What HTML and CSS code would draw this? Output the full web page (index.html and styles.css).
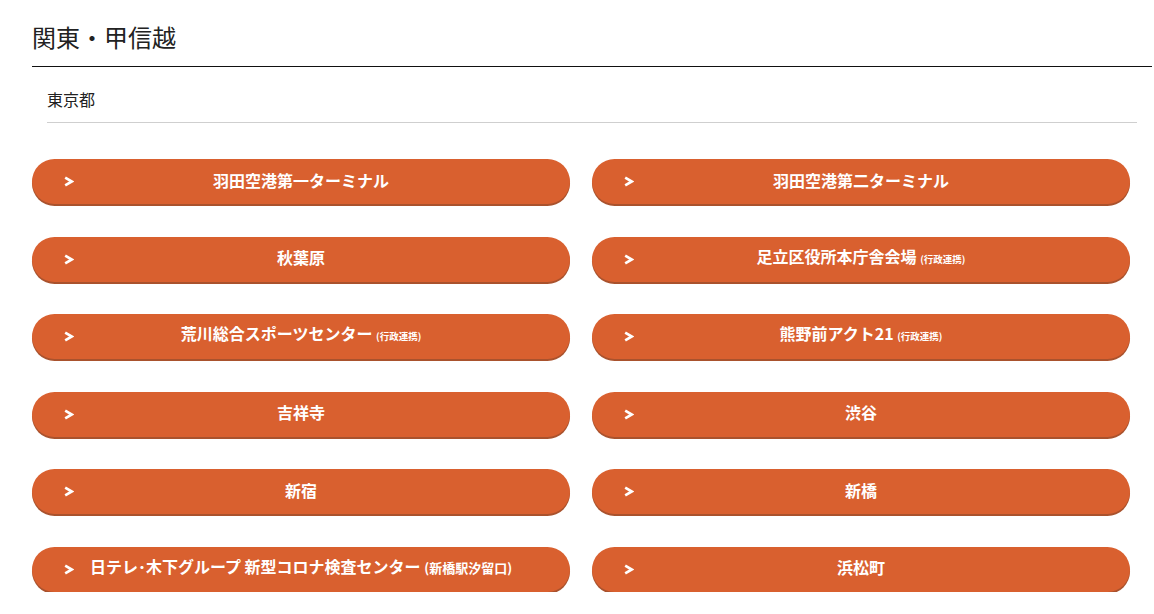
FILE: index.html
```html
<!DOCTYPE html>
<html lang="ja">
<head>
<meta charset="utf-8">
<link rel="stylesheet" href="styles.css">
</head>
<body>
<div class="page">
  <h2 class="region">関東・甲信越</h2>
  <h3 class="pref">東京都</h3>
  <ul class="list">
    <li><a class="btn" href="#"><svg class="chev" viewBox="0 0 10 10"><polyline points="2,1.5 8,5 2,8.5"/></svg><span>羽田空港第一ターミナル</span></a></li>
    <li><a class="btn" href="#"><svg class="chev" viewBox="0 0 10 10"><polyline points="2,1.5 8,5 2,8.5"/></svg><span>羽田空港第二ターミナル</span></a></li>
    <li><a class="btn" href="#"><svg class="chev" viewBox="0 0 10 10"><polyline points="2,1.5 8,5 2,8.5"/></svg><span>秋葉原</span></a></li>
    <li><a class="btn" href="#"><svg class="chev" viewBox="0 0 10 10"><polyline points="2,1.5 8,5 2,8.5"/></svg><span>足立区役所本庁舎会場 <small class="note">(行政連携)</small></span></a></li>
    <li><a class="btn" href="#"><svg class="chev" viewBox="0 0 10 10"><polyline points="2,1.5 8,5 2,8.5"/></svg><span>荒川総合スポーツセンター <small class="note">(行政連携)</small></span></a></li>
    <li><a class="btn" href="#"><svg class="chev" viewBox="0 0 10 10"><polyline points="2,1.5 8,5 2,8.5"/></svg><span>熊野前アクト21 <small class="note">(行政連携)</small></span></a></li>
    <li><a class="btn" href="#"><svg class="chev" viewBox="0 0 10 10"><polyline points="2,1.5 8,5 2,8.5"/></svg><span>吉祥寺</span></a></li>
    <li><a class="btn" href="#"><svg class="chev" viewBox="0 0 10 10"><polyline points="2,1.5 8,5 2,8.5"/></svg><span>渋谷</span></a></li>
    <li><a class="btn" href="#"><svg class="chev" viewBox="0 0 10 10"><polyline points="2,1.5 8,5 2,8.5"/></svg><span>新宿</span></a></li>
    <li><a class="btn" href="#"><svg class="chev" viewBox="0 0 10 10"><polyline points="2,1.5 8,5 2,8.5"/></svg><span>新橋</span></a></li>
    <li><a class="btn" href="#"><svg class="chev" viewBox="0 0 10 10"><polyline points="2,1.5 8,5 2,8.5"/></svg><span>日テレ･木下グループ 新型コロナ検査センター <small class="note big">(新橋駅汐留口)</small></span></a></li>
    <li><a class="btn" href="#"><svg class="chev" viewBox="0 0 10 10"><polyline points="2,1.5 8,5 2,8.5"/></svg><span>浜松町</span></a></li>
  </ul>
</div>
</body>
</html>
```
FILE: styles.css
```css
* { box-sizing: border-box; }
html, body { margin: 0; padding: 0; background: #fff; }
body {
  font-family: "Noto Sans CJK JP", "Noto Sans", sans-serif;
  color: #222;
}
.page {
  width: 1120px;
  margin-left: 32px;
  padding-top: 19px;
}
.region {
  margin: 0;
  font-size: 24px;
  line-height: 36px;
  font-weight: 400;
  padding-bottom: 11px;
  border-bottom: 1px solid #111;
}
.pref {
  margin: 20px 15px 0;
  font-size: 16px;
  line-height: 24px;
  font-weight: 400;
  padding-bottom: 11px;
  border-bottom: 1px solid #cfcfcf;
}
.list {
  list-style: none;
  margin: 36px 0 0;
  padding: 0;
  display: grid;
  grid-template-columns: 538px 538px;
  column-gap: 22px;
  row-gap: 32.5px;
}
.btn {
  position: relative;
  display: flex;
  align-items: center;
  justify-content: center;
  height: 45px;
  border-radius: 23px;
  background: #d9602f;
  box-shadow: 0 2px 0 #a9522d;
  color: #fff;
  font-weight: 700;
  font-size: 16px;
  line-height: 20px;
  text-decoration: none;
  padding: 0 40px 4px;
  white-space: nowrap;
}
.chev {
  position: absolute;
  left: 31px;
  top: 17px;
  width: 11px;
  height: 11px;
  fill: none;
  stroke: #fff;
  stroke-width: 2.4;
  stroke-linejoin: miter;
}
.note {
  font-size: 9.5px;
  font-weight: 700;
}
.note.big {
  font-size: 13px;
}
```
